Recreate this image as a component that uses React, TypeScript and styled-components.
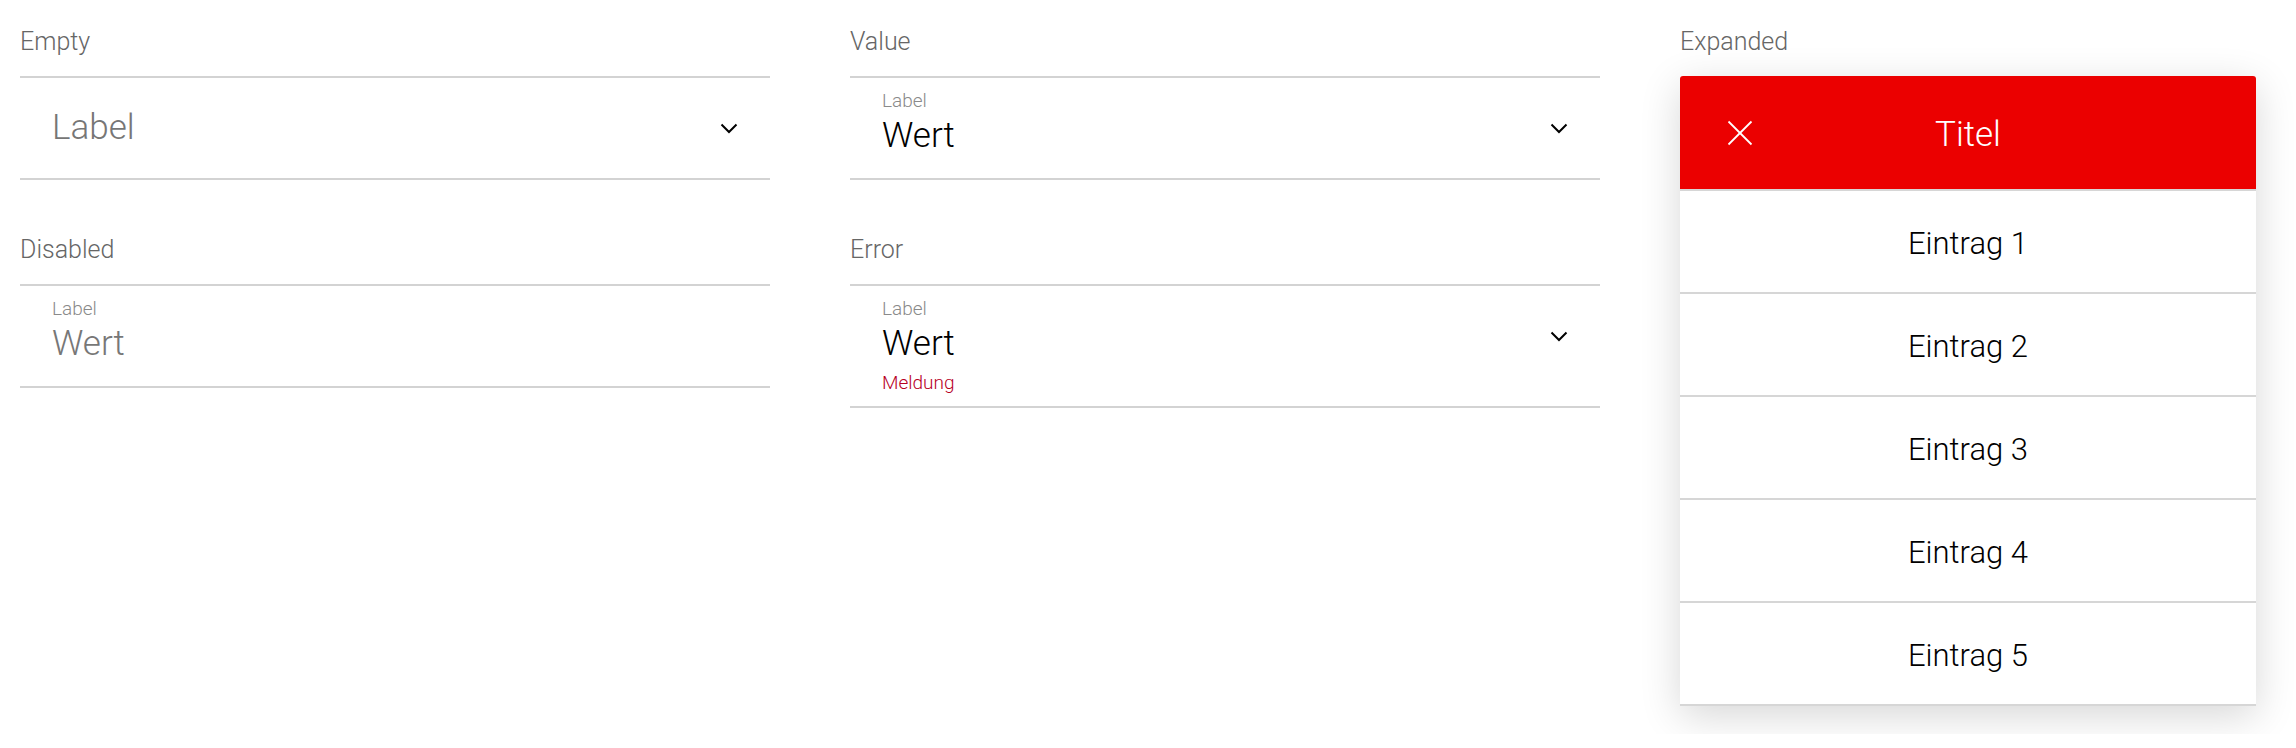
import React from "react";
import styled, { createGlobalStyle } from "styled-components";

const GlobalStyle = createGlobalStyle`
  html, body {
    margin: 0;
    padding: 0;
    background: #ffffff;
  }
  body {
    font-family: Roboto, "Helvetica Neue", "Liberation Sans", Arial, sans-serif;
    font-weight: 300;
    -webkit-font-smoothing: antialiased;
  }
`;

const Page = styled.div`
  display: grid;
  grid-template-columns: 750px 750px 576px;
  column-gap: 80px;
  align-items: start;
  padding: 28px 20px;
`;

const Column = styled.div`
  display: flex;
  flex-direction: column;
  gap: 56px;
`;

const Section = styled.section`
  display: flex;
  flex-direction: column;
`;

const SectionTitle = styled.div`
  font-size: 25px;
  line-height: 28px;
  color: #666666;
  font-weight: 300;
  margin-bottom: 20px;
`;

const Field = styled.div`
  display: grid;
  grid-template-columns: 1fr auto;
  padding: 0 32px;
  border-top: 2px solid #d3d3d3;
  border-bottom: 2px solid #d3d3d3;
`;

const TextBlock = styled.div<{ $error?: boolean }>`
  display: flex;
  flex-direction: column;
  padding: 12px 0 ${(p) => (p.$error ? "12px" : "22px")};
`;

const Placeholder = styled.div`
  height: 100px;
  display: flex;
  align-items: center;
  font-size: 35px;
  line-height: 40px;
  color: #767676;
`;

const SmallLabel = styled.div`
  font-size: 19px;
  line-height: 22px;
  color: #8a8a8a;
`;

const Value = styled.div<{ $disabled?: boolean }>`
  margin-top: 4px;
  font-size: 35px;
  line-height: 40px;
  color: ${(p) => (p.$disabled ? "#777777" : "#000000")};
`;

const Message = styled.div`
  margin-top: 8px;
  font-size: 19px;
  line-height: 22px;
  color: #b8001f;
`;

const ChevronCell = styled.div`
  height: 100px;
  display: flex;
  align-items: center;
`;

const Card = styled.div`
  display: flex;
  flex-direction: column;
  background: #ffffff;
  border-radius: 3px 3px 0 0;
  overflow: hidden;
  box-shadow: 0 10px 40px rgba(0, 0, 0, 0.16);
`;

const CardHeader = styled.div`
  display: grid;
  grid-template-columns: 120px 1fr 120px;
  align-items: center;
  height: 113px;
  background: #eb0000;
  border-bottom: 2px solid #d6d6d6;
  color: #ffffff;
`;

const CloseButton = styled.div`
  display: flex;
  justify-content: center;
  align-items: center;
`;

const CardTitle = styled.div`
  text-align: center;
  font-size: 35px;
  line-height: 40px;
  padding-top: 4px;
`;

const Item = styled.div`
  height: 101px;
  padding-top: 4px;
  box-sizing: border-box;
  display: flex;
  align-items: center;
  justify-content: center;
  border-bottom: 2px solid #d6d6d6;
  font-size: 31px;
  line-height: 36px;
  color: #000000;
  box-sizing: content-box;
  height: 97px;
`;

const Chevron = () => (
  <svg width="18" height="11" viewBox="0 0 18 11" fill="none">
    <polyline points="1.5,1.5 9,9 16.5,1.5" stroke="#000" strokeWidth="2" />
  </svg>
);

const CloseIcon = () => (
  <svg width="26" height="26" viewBox="0 0 26 26" fill="none">
    <line x1="1.5" y1="1.5" x2="24.5" y2="24.5" stroke="#fff" strokeWidth="1.8" />
    <line x1="24.5" y1="1.5" x2="1.5" y2="24.5" stroke="#fff" strokeWidth="1.8" />
  </svg>
);

export default function App() {
  return (
    <>
      <GlobalStyle />
      <Page>
        <Column>
          <Section>
            <SectionTitle>Empty</SectionTitle>
            <Field>
              <Placeholder>Label</Placeholder>
              <ChevronCell>
                <Chevron />
              </ChevronCell>
            </Field>
          </Section>
          <Section>
            <SectionTitle>Disabled</SectionTitle>
            <Field>
              <TextBlock>
                <SmallLabel>Label</SmallLabel>
                <Value $disabled>Wert</Value>
              </TextBlock>
            </Field>
          </Section>
        </Column>
        <Column>
          <Section>
            <SectionTitle>Value</SectionTitle>
            <Field>
              <TextBlock>
                <SmallLabel>Label</SmallLabel>
                <Value>Wert</Value>
              </TextBlock>
              <ChevronCell>
                <Chevron />
              </ChevronCell>
            </Field>
          </Section>
          <Section>
            <SectionTitle>Error</SectionTitle>
            <Field>
              <TextBlock $error>
                <SmallLabel>Label</SmallLabel>
                <Value>Wert</Value>
                <Message>Meldung</Message>
              </TextBlock>
              <ChevronCell>
                <Chevron />
              </ChevronCell>
            </Field>
          </Section>
        </Column>
        <Column>
          <Section>
            <SectionTitle>Expanded</SectionTitle>
            <Card>
              <CardHeader>
                <CloseButton>
                  <CloseIcon />
                </CloseButton>
                <CardTitle>Titel</CardTitle>
                <span />
              </CardHeader>
              {[1, 2, 3, 4, 5].map((n) => (
                <Item key={n}>Eintrag {n}</Item>
              ))}
            </Card>
          </Section>
        </Column>
      </Page>
    </>
  );
}
